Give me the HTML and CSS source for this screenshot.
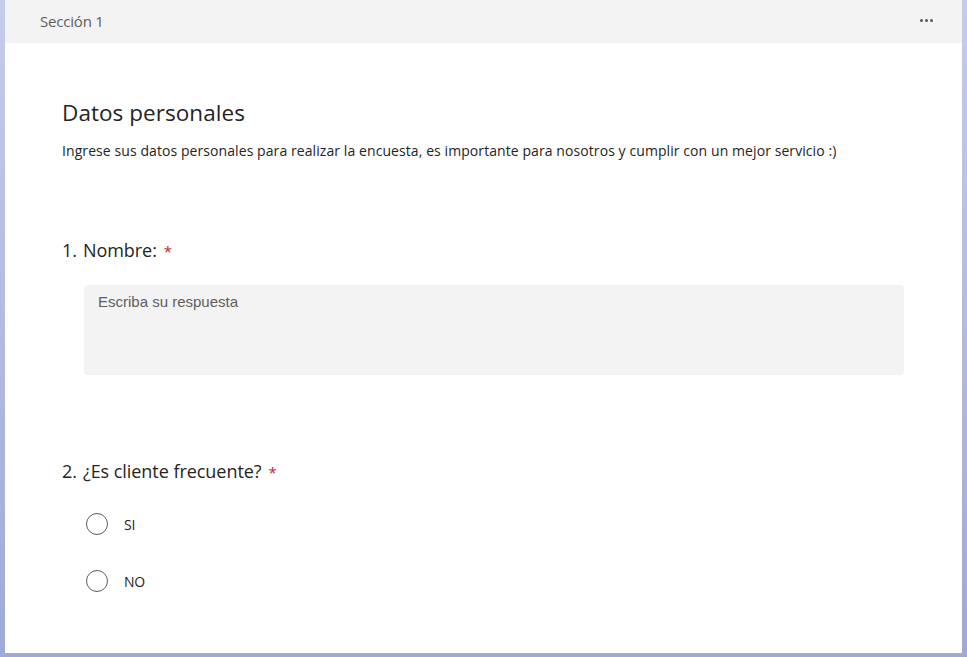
FILE: index.html
```html
<!DOCTYPE html>
<html lang="es">
<head>
<meta charset="utf-8">
<link rel="stylesheet" href="styles.css">
</head>
<body>
<div class="card">
  <div class="card-header">
    <span class="section-title">Sección 1</span>
    <span class="more"><i></i><i></i><i></i></span>
  </div>
  <div class="card-body">
    <h1 class="form-title">Datos personales</h1>
    <p class="form-desc">Ingrese sus datos personales para realizar la encuesta, es importante para nosotros y cumplir con un mejor servicio :)</p>

    <div class="question q1">
      <div class="q-title"><span class="q-num">1.</span>Nombre:<span class="req">*</span></div>
      <div class="answer-box">Escriba su respuesta</div>
    </div>

    <div class="question q2">
      <div class="q-title"><span class="q-num">2.</span>¿Es cliente frecuente?<span class="req">*</span></div>
      <div class="options">
        <label class="option"><span class="radio"></span><span class="opt-label">SI</span></label>
        <label class="option"><span class="radio"></span><span class="opt-label">NO</span></label>
      </div>
    </div>
  </div>
</div>
</body>
</html>
```
FILE: styles.css
```css
html, body {
  margin: 0;
  padding: 0;
  height: 100%;
}
body {
  background: linear-gradient(180deg, #c6cce8 0%, #9fa9d6 100%);
  font-family: "Open Sans", "Noto Sans", sans-serif;
  color: #252423;
}
.card {
  margin: 0 5px;
  height: 653px;
  background: #ffffff;
  display: flex;
  flex-direction: column;
}
.card-header {
  height: 43px;
  background: #f3f3f3;
  display: flex;
  align-items: center;
  justify-content: space-between;
  padding: 0 29px 2px 35px;
  box-sizing: border-box;
}
.section-title {
  font-size: 15px;
  color: #605e5c;
  letter-spacing: -0.2px;
}
.more {
  display: flex;
  gap: 2px;
}
.more i {
  width: 3px;
  height: 3px;
  border-radius: 50%;
  background: #5a5856;
}
.card-body {
  padding: 0 0 0 57px;
}
.form-title {
  margin: 55px 0 0 0;
  font-size: 22.5px;
  font-weight: 400;
  line-height: 30px;
  letter-spacing: 0.05px;
}
.form-desc {
  margin: 14px 0 0 0;
  font-size: 14px;
  line-height: 18px;
  letter-spacing: 0.08px;
}
.question {
  margin-top: 78px;
}
.q-title {
  font-size: 18px;
  line-height: 24px;
  letter-spacing: -0.05px;
}
.q-num {
  margin-right: 6px;
}
.req {
  color: #c4262e;
  margin-left: 7px;
  font-size: 15px;
}
.answer-box {
  margin: 22px 58px 0 22px;
  height: 90px;
  background: #f3f3f3;
  border-radius: 4px;
  box-sizing: border-box;
  padding: 8px 14px;
  font-family: "Liberation Sans", Arial, sans-serif;
  font-size: 15px;
  color: #605e5c;
  line-height: 18px;
}
.q2 {
  margin-top: 84px;
}
.options {
  display: flex;
  flex-direction: column;
  gap: 35px;
  margin: 29px 0 0 24px;
}
.option {
  display: flex;
  align-items: center;
  height: 22px;
}
.radio {
  width: 20px;
  height: 20px;
  border: 1px solid #605e5c;
  border-radius: 50%;
  margin-right: 16px;
}
.opt-label {
  font-size: 14px;
  letter-spacing: -0.2px;
}
```
